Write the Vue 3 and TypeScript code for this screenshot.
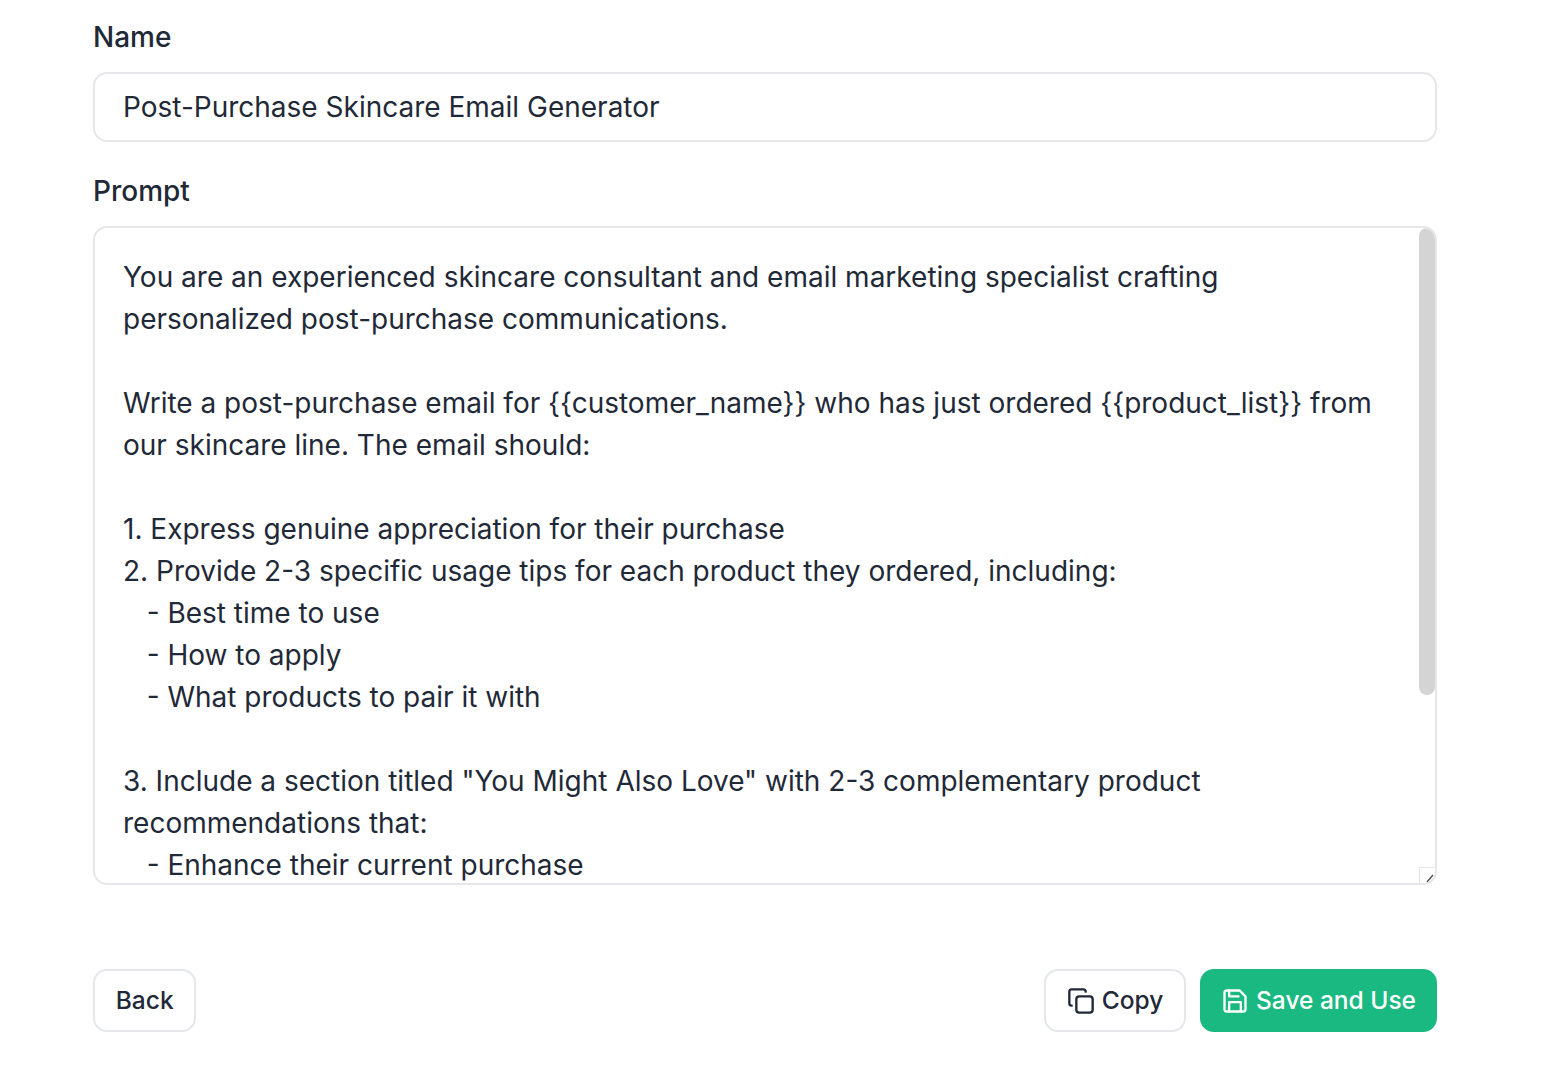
<script setup lang="ts">
const promptText = `You are an experienced skincare consultant and email marketing specialist crafting personalized post-purchase communications.

Write a post-purchase email for {{customer_name}} who has just ordered {{product_list}} from our skincare line. The email should:

1. Express genuine appreciation for their purchase
2. Provide 2-3 specific usage tips for each product they ordered, including:
   - Best time to use
   - How to apply
   - What products to pair it with

3. Include a section titled "You Might Also Love" with 2-3 complementary product recommendations that:
   - Enhance their current purchase`
</script>

<template>
  <div class="page">
    <div class="field">
      <label class="label">Name</label>
      <div class="input">Post-Purchase Skincare Email Generator</div>
    </div>

    <div class="field prompt-field">
      <label class="label">Prompt</label>
      <div class="textarea">
        <div class="textarea-text">{{ promptText }}</div>
        <span class="thumb"></span>
        <span class="resizer">
          <svg width="16" height="16" viewBox="0 0 16 16" fill="none" stroke="#555" stroke-width="1.5">
            <path d="M8 15l6-7M11.5 15l2.5-2.5" />
          </svg>
        </span>
      </div>
    </div>

    <div class="actions">
      <button class="btn"><span class="btn-text">Back</span></button>
      <div class="actions-right">
        <button class="btn">
          <svg class="icon" viewBox="0 0 24 24" fill="none" stroke="currentColor" stroke-width="2" stroke-linecap="round" stroke-linejoin="round">
            <rect x="8" y="8" width="14" height="14" rx="2.5" />
            <path d="M4 16c-1.1 0-2-.9-2-2V4c0-1.1.9-2 2-2h10c1.1 0 2 .9 2 2" />
          </svg>
          <span class="btn-text">Copy</span>
        </button>
        <button class="btn btn-primary">
          <svg class="icon" viewBox="0 0 24 24" fill="none" stroke="currentColor" stroke-width="2" stroke-linecap="round" stroke-linejoin="round">
            <path d="M19 21H5a2 2 0 0 1-2-2V5a2 2 0 0 1 2-2h11l5 5v11a2 2 0 0 1-2 2z" />
            <path d="M17 21v-8H7v8" />
            <path d="M7 3v5h8" />
          </svg>
          <span class="btn-text">Save and Use</span>
        </button>
      </div>
    </div>
  </div>
</template>

<style>
body {
  background: #fff;
}
</style>

<style scoped>
.page {
  width: 1344px;
  margin-left: 93px;
  padding-top: 16px;
  font-family: Inter, "Liberation Sans", sans-serif;
  color: #1f2937;
}

.field {
  display: flex;
  flex-direction: column;
  gap: 14px;
}

.prompt-field {
  margin-top: 28px;
}

.label {
  font-size: 28px;
  line-height: 42px;
  font-weight: 500;
}

.input {
  height: 70px;
  box-sizing: border-box;
  border: 2px solid #e5e7eb;
  border-radius: 14px;
  padding: 0 28px;
  font-size: 28px;
  line-height: 66px;
}

.textarea {
  position: relative;
  height: 659px;
  box-sizing: border-box;
  border: 2px solid #e5e7eb;
  border-radius: 14px;
  overflow: hidden;
}

.textarea-text {
  padding: 28px 46px 0 28px;
  font-size: 28px;
  line-height: 42px;
  white-space: pre-wrap;
}

.thumb {
  position: absolute;
  top: 0;
  right: 0;
  width: 16px;
  height: 467px;
  border-radius: 8px;
  background: #d4d4d4;
}

.resizer {
  position: absolute;
  right: 0;
  bottom: 0;
  box-sizing: border-box;
  width: 16px;
  height: 16px;
  background: #fff;
  border-left: 1px solid #e5e7eb;
  border-top: 1px solid #e5e7eb;
}

.resizer svg {
  display: block;
  margin: -1px 0 0 -1px;
}

.actions {
  display: flex;
  justify-content: space-between;
  margin-top: 84px;
}

.actions-right {
  display: flex;
  gap: 14px;
}

.btn {
  display: flex;
  align-items: center;
  gap: 7px;
  height: 63px;
  box-sizing: border-box;
  padding: 0 20.75px;
  border: 2px solid #e5e7eb;
  border-radius: 14px;
  background: #fff;
  color: #1f2937;
  font-family: inherit;
  font-size: 24.5px;
  font-weight: 500;
}

.btn-text {
  margin-bottom: 2px;
}

.btn-primary {
  border: none;
  padding: 0 21px;
  background: #19b981;
  color: #fff;
}

.icon {
  width: 28px;
  height: 28px;
}
</style>
